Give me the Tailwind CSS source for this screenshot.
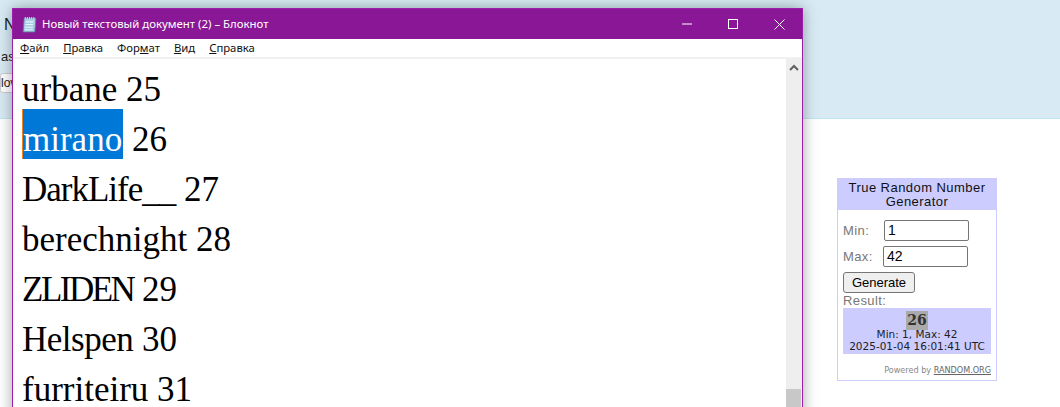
<!DOCTYPE html>
<html lang="ru">
<head>
    <meta charset="UTF-8">
    <title>Блокнот</title>
    <script src="https://cdn.jsdelivr.net/npm/@tailwindcss/browser@4"></script>
</head>
<body class="relative w-[1060px] h-[407px] overflow-hidden bg-white font-['Liberation_Sans',sans-serif]">
    <!-- page behind the window -->
    <div class="h-[119px] bg-[#d8ebf5] border-b border-[#bfe6ee] text-[13px] text-[#222]">
        <div class="pl-[4px] pt-[17px] text-[16px] leading-[16px]">N</div>
        <div class="pl-[1px] pt-[16px] leading-[16px]">as</div>
        <div class="mt-[8px] w-[40px] h-[20px] bg-white border border-[#ccc] rounded-[3px] text-[12px] leading-[18px]">lov</div>
    </div>

    <div class="flex justify-end pr-[63px] pt-[59px]">
        <!-- random.org widget -->
        <div class="w-[160px] h-[203px] border border-[#ccccff] font-['DejaVu_Sans',sans-serif]">
            <div class="bg-[#ccccff] text-center text-[13px] leading-[14px] pt-[2px] h-[31px] -mx-px text-[#111] font-['Liberation_Sans',sans-serif] tracking-[0.45px]">True Random Number<br>Generator</div>
            <div class="px-[5px] pt-[10px] text-[12px] text-[#777]">
                <div class="flex items-center h-[21px]">
                    <span class="w-[41px] font-['Liberation_Sans',sans-serif] text-[13px] tracking-[0.4px]">Min:</span>
                    <div class="w-[85px] h-[21px] bg-white border border-[#767676] rounded-[2px] px-[3px] text-[14px] leading-[19px] text-black font-['Liberation_Sans',sans-serif]">1</div>
                </div>
                <div class="flex items-center h-[21px] mt-[5px]">
                    <span class="w-[40px] font-['Liberation_Sans',sans-serif] text-[13px] tracking-[0.4px]">Max:</span>
                    <div class="w-[85px] h-[21px] bg-white border border-[#767676] rounded-[2px] px-[3px] text-[14px] leading-[19px] text-black font-['Liberation_Sans',sans-serif]">42</div>
                </div>
                <button class="block mt-[5px] w-[72px] h-[21px] bg-[#efefef] border border-[#767676] rounded-[3px] text-[13px] leading-[19px] text-black font-['Liberation_Sans',sans-serif]">Generate</button>
                <div class="text-[13px] leading-[15px] tracking-[0.4px] font-['Liberation_Sans',sans-serif]">Result:</div>
                <div class="w-[148px] h-[46px] bg-[#ccccff] text-center text-[#222]">
                    <div class="pt-[3px] h-[20px] leading-[19px]"><span class="inline-block bg-[#aaaaaa] px-[1px] font-['DejaVu_Serif',serif] font-bold text-[14px] leading-[19px] text-[#333]">26</span></div>
                    <div class="text-[10.5px] leading-[12px]">Min: 1, Max: 42</div>
                    <div class="text-[10.5px] leading-[13px]">2025-01-04 16:01:41 UTC</div>
                </div>
                <div class="mt-[10px] text-right text-[8.1px] leading-[12px] text-[#888]">Powered by <span class="underline text-[#666]">RANDOM.ORG</span></div>
            </div>
        </div>
    </div>

    <!-- notepad window -->
    <div class="absolute left-[12px] top-[8px] w-[791px] h-[420px] flex flex-col bg-white border border-[#9b1fa8] shadow-[0_0_14px_rgba(0,0,0,0.35)]">
        <div class="h-[30px] flex items-center bg-[#8a1795] text-white text-[11.4px] shrink-0">
            <svg class="ml-[8px] mr-[4px]" width="17" height="17" viewBox="0 0 16 16">
                <path d="M3 2h11l-1 13H2z" fill="#a9cfe6" stroke="#5a7f9c" stroke-width="0.8"/>
                <path d="M4.5 5.5h7M4.3 8h7M4 10.5h7M3.8 13h7" stroke="#eaf5fb" stroke-width="1"/>
                <path d="M4 1v2M6 1v2M8 1v2M10 1v2M12 1v2" stroke="#dde" stroke-width="0.9"/>
            </svg>
            <span class="font-['Noto_Sans',sans-serif]">Новый текстовый документ (2) – Блокнот</span>
            <div class="ml-auto flex h-full">
                <div class="w-[46px] flex items-center justify-center">
                    <svg width="10" height="10" viewBox="0 0 10 10"><path d="M0 5h10" stroke="white" stroke-width="1"/></svg>
                </div>
                <div class="w-[46px] flex items-center justify-center">
                    <svg width="10" height="10" viewBox="0 0 10 10"><rect x="0.5" y="0.5" width="9" height="9" fill="none" stroke="white" stroke-width="1"/></svg>
                </div>
                <div class="w-[46px] flex items-center justify-center">
                    <svg width="11" height="11" viewBox="0 0 11 11"><path d="M0.5 0.5l10 10M10.5 0.5l-10 10" stroke="white" stroke-width="1"/></svg>
                </div>
            </div>
        </div>
        <div class="h-[18px] flex items-center gap-[14px] pl-[7px] text-[11.3px] text-[#111] shrink-0 font-['Noto_Sans',sans-serif]">
            <span><u>Ф</u>айл</span><span><u>П</u>равка</span><span>Фор<u>м</u>ат</span><span><u>В</u>ид</span><span><u>С</u>правка</span>
        </div>
        <div class="h-[2px] bg-[#f0f0f0] shrink-0"></div>
        <div class="flex flex-1 min-h-0">
            <div class="flex-1 overflow-hidden pl-[9px] font-['Liberation_Serif',serif] text-[35px] leading-[62px] text-black whitespace-nowrap">
                <div class="h-[50px]">urbane 25</div>
                <div class="h-[50px]"><span class="inline-block h-[50px] pr-px bg-[#0078d7] text-white border-l border-[#f08020]">mirano</span> 26</div>
                <div class="h-[50px]"><span class="tracking-[-1px]">DarkLife__</span> 27</div>
                <div class="h-[50px]">berechnight 28</div>
                <div class="h-[50px]"><span class="tracking-[-2.5px]">ZLIDEN</span> 29</div>
                <div class="h-[50px]"><span class="tracking-[-0.5px]">Helspen</span> 30</div>
                <div class="h-[50px]">furriteiru 31</div>
            </div>
            <div class="relative w-[16px] bg-[#eeeeee] shrink-0">
                <svg class="absolute left-[3px] top-[5px]" width="10" height="8" viewBox="0 0 10 8"><path d="M1 6l4-4 4 4" fill="none" stroke="#606060" stroke-width="2"/></svg>
                <div class="absolute left-0 top-[330px] w-[15px] h-[60px] bg-[#c8c8c8]"></div>
            </div>
        </div>
    </div>
</body>
</html>
